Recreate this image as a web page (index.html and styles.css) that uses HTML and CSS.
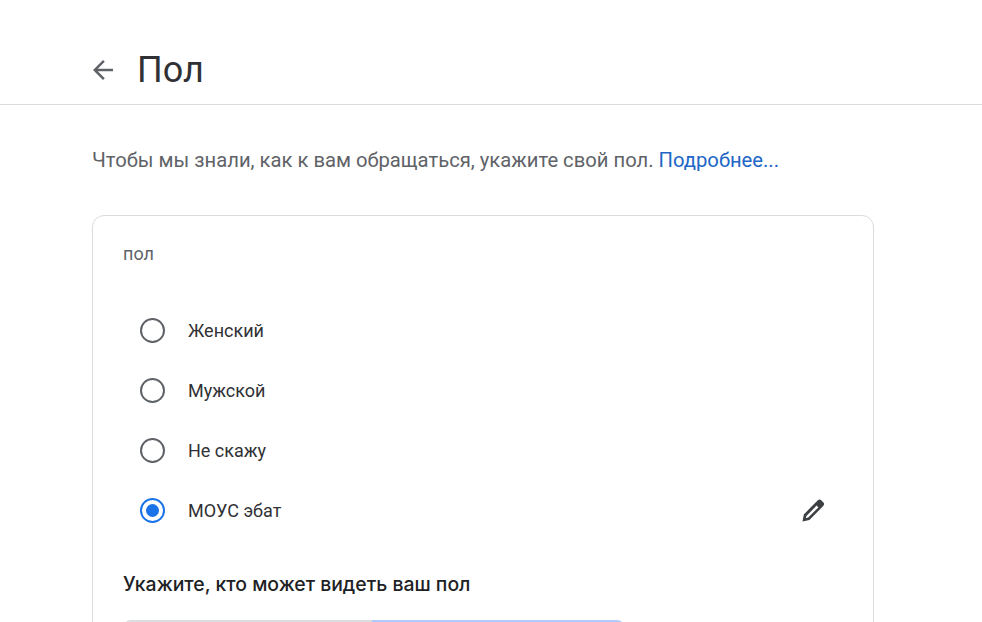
FILE: index.html
```html
<!DOCTYPE html>
<html lang="ru">
<head>
<meta charset="utf-8">
<title>Пол</title>
<link rel="stylesheet" href="styles.css">
</head>
<body>
<header class="top">
  <svg class="back" width="30" height="30" viewBox="0 0 24 24"><path d="M20 11H7.83l5.59-5.59L12 4l-8 8 8 8 1.41-1.41L7.83 13H20z"/></svg>
  <h1 class="title">Пол</h1>
</header>
<main class="content">
  <p class="intro">Чтобы мы знали, как к вам обращаться, укажите свой пол. <a class="link" href="#">Подробнее...</a></p>
  <section class="card">
    <div class="label">пол</div>
    <div class="options">
      <div class="row"><span class="radio"></span><span class="opt">Женский</span></div>
      <div class="row"><span class="radio"></span><span class="opt">Мужской</span></div>
      <div class="row"><span class="radio"></span><span class="opt">Не скажу</span></div>
      <div class="row"><span class="radio on"></span><span class="opt">МОУС эбат</span>
        <svg class="edit" width="24" height="24" viewBox="0 0 24 24"><path fill-rule="evenodd" d="M1.5 23.5 2.8 16.4 16.6 2.4Q18.4 .8 20.2 2.2L22.5 4.5Q23.8 6.3 22.2 8L8.4 22ZM4.8 20.2 5.4 18 15.6 7.6 17.4 9.4 7.2 19.6Z"/></svg>
      </div>
    </div>
    <h2 class="sub">Укажите, кто может видеть ваш пол</h2>
    <div class="toggle"><div class="seg"></div><div class="seg active"></div></div>
  </section>
</main>
</body>
</html>
```
FILE: styles.css
```css
html, body { margin: 0; height: 100%; overflow: hidden; background: #fff; }
body { font-family: Roboto, "Liberation Sans", sans-serif; color: #202124; }
.top { height: 68px; padding: 36px 0 0 88px; border-bottom: 1px solid #dadce0; display: flex; align-items: center; gap: 19px; }
.back { fill: #5f6368; flex: none; }
.title { margin: 0; font-weight: 400; font-size: 36px; line-height: 44px; color: #303134; }
.content { padding: 0 108px 0 92px; }
.intro { margin: 0; padding-top: 43px; font-size: 20.23px; line-height: 24px; color: #5f6368; }
.link { color: #2166c6; text-decoration: none; }
.card { margin-top: 43px; border: 1px solid #dadce0; border-radius: 12px; padding: 0 30px; height: 500px; }
.label { margin-top: 26px; font-size: 18px; line-height: 24px; color: #5f6368; }
.options { margin-top: 34px; display: flex; flex-direction: column; }
.row { height: 60px; display: flex; align-items: center; padding-left: 17px; }
.radio { width: 21px; height: 21px; border: 2px solid #5f6368; border-radius: 50%; flex: none; }
.radio.on { border-color: #1a73e8; position: relative; }
.radio.on::after { content: ""; position: absolute; inset: 4px; border-radius: 50%; background: #1a73e8; }
.opt { margin-left: 23px; font-size: 18px; color: #303134; }
.edit { margin-left: auto; margin-right: 18px; fill: #3c4043; flex: none; }
.sub { margin: 31px 0 0; font-family: Inter, sans-serif; font-weight: 500; font-size: 19.4px; line-height: 26px; color: #202124; }
.toggle { margin-top: 23px; display: flex; height: 40px; }
.seg { width: 249px; border-top: 2px solid #dadce0; border-radius: 8px 0 0 0; box-sizing: border-box; }
.seg.active { width: 253px; border-color: #aecbfa; border-radius: 0 8px 0 0; background: #e8f0fe; }
```
